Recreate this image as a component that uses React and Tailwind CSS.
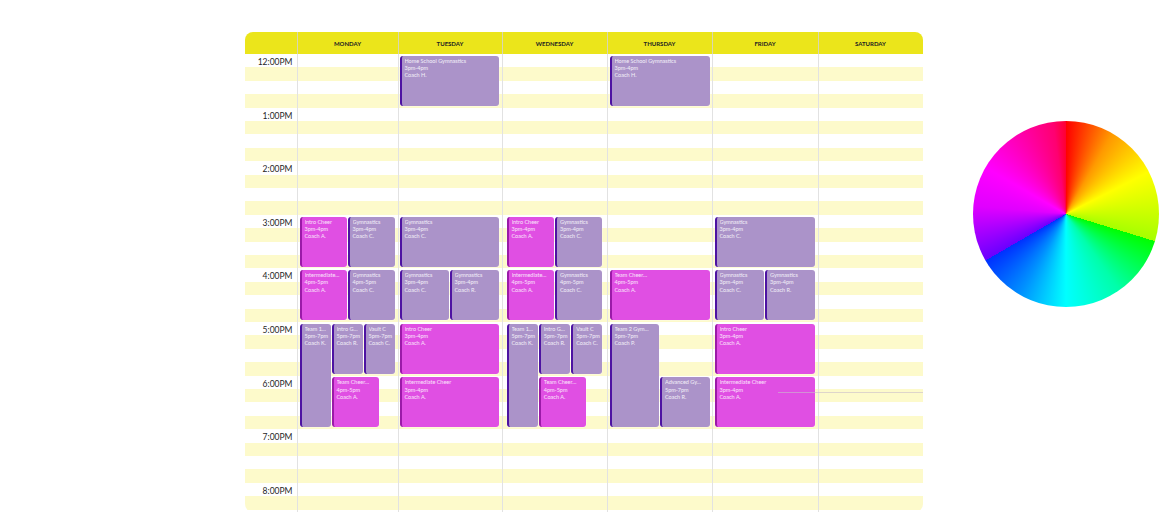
import React from "react";

const HOURS = ["12:00PM", "1:00PM", "2:00PM", "3:00PM", "4:00PM", "5:00PM", "6:00PM", "7:00PM", "8:00PM"];

const KIND = {
  gym: "bg-[#ab93c9] border-[#4d13a2]",
  cheer: "bg-[#e04fe3] border-[#9b1aa8]",
};

// row = quarter-hour slot from 12:00PM, col = sixths of the day column
const DAYS = [
  {
    name: "MONDAY",
    width: "w-[101px]",
    pad: "pl-[2px] pr-[2px]",
    events: [
      { title: "Intro Cheer", time: "3pm-4pm", coach: "Coach A.", kind: "cheer", pos: "row-[13/span_4] col-[1/span_3]" },
      { title: "Gymnastics", time: "3pm-4pm", coach: "Coach C.", kind: "gym", pos: "row-[13/span_4] col-[4/span_3]" },
      { title: "Intermediate…", time: "4pm-5pm", coach: "Coach A.", kind: "cheer", pos: "row-[17/span_4] col-[1/span_3]" },
      { title: "Gymnastics", time: "4pm-5pm", coach: "Coach C.", kind: "gym", pos: "row-[17/span_4] col-[4/span_3]" },
      { title: "Team 1…", time: "5pm-7pm", coach: "Coach K.", kind: "gym", pos: "row-[21/span_8] col-[1/span_2]" },
      { title: "Intro G…", time: "5pm-7pm", coach: "Coach R.", kind: "gym", pos: "row-[21/span_4] col-[3/span_2]" },
      { title: "Vault C", time: "5pm-7pm", coach: "Coach C.", kind: "gym", pos: "row-[21/span_4] col-[5/span_2]" },
      { title: "Team Cheer…", time: "4pm-5pm", coach: "Coach A.", kind: "cheer", pos: "row-[25/span_4] col-[3/span_3]" },
    ],
  },
  {
    name: "TUESDAY",
    width: "w-[104px]",
    pad: "pl-[1px] pr-[2px]",
    events: [
      { title: "Home School Gymnastics", time: "3pm-4pm", coach: "Coach H.", kind: "gym", pos: "row-[1/span_4] col-[1/span_6]" },
      { title: "Gymnastics", time: "3pm-4pm", coach: "Coach C.", kind: "gym", pos: "row-[13/span_4] col-[1/span_6]" },
      { title: "Gymnastics", time: "3pm-4pm", coach: "Coach C.", kind: "gym", pos: "row-[17/span_4] col-[1/span_3]" },
      { title: "Gymnastics", time: "3pm-4pm", coach: "Coach R.", kind: "gym", pos: "row-[17/span_4] col-[4/span_3]" },
      { title: "Intro Cheer", time: "3pm-4pm", coach: "Coach A.", kind: "cheer", pos: "row-[21/span_4] col-[1/span_6]" },
      { title: "Intermediate Cheer", time: "3pm-4pm", coach: "Coach A.", kind: "cheer", pos: "row-[25/span_4] col-[1/span_6]" },
    ],
  },
  {
    name: "WEDNESDAY",
    width: "w-[105px]",
    pad: "pl-[4px] pr-[3px]",
    events: [
      { title: "Intro Cheer", time: "3pm-4pm", coach: "Coach A.", kind: "cheer", pos: "row-[13/span_4] col-[1/span_3]" },
      { title: "Gymnastics", time: "3pm-4pm", coach: "Coach C.", kind: "gym", pos: "row-[13/span_4] col-[4/span_3]" },
      { title: "Intermediate…", time: "4pm-5pm", coach: "Coach A.", kind: "cheer", pos: "row-[17/span_4] col-[1/span_3]" },
      { title: "Gymnastics", time: "4pm-5pm", coach: "Coach C.", kind: "gym", pos: "row-[17/span_4] col-[4/span_3]" },
      { title: "Team 1…", time: "5pm-7pm", coach: "Coach K.", kind: "gym", pos: "row-[21/span_8] col-[1/span_2]" },
      { title: "Intro G…", time: "5pm-7pm", coach: "Coach R.", kind: "gym", pos: "row-[21/span_4] col-[3/span_2]" },
      { title: "Vault C", time: "5pm-7pm", coach: "Coach C.", kind: "gym", pos: "row-[21/span_4] col-[5/span_2]" },
      { title: "Team Cheer…", time: "4pm-5pm", coach: "Coach A.", kind: "cheer", pos: "row-[25/span_4] col-[3/span_3]" },
    ],
  },
  {
    name: "THURSDAY",
    width: "w-[105px]",
    pad: "pl-[2px] pr-[1px]",
    events: [
      { title: "Home School Gymnastics", time: "3pm-4pm", coach: "Coach H.", kind: "gym", pos: "row-[1/span_4] col-[1/span_6]" },
      { title: "Team Cheer…", time: "4pm-5pm", coach: "Coach A.", kind: "cheer", pos: "row-[17/span_4] col-[1/span_6]" },
      { title: "Team 2 Gym…", time: "5pm-7pm", coach: "Coach P.", kind: "gym", pos: "row-[21/span_8] col-[1/span_3]" },
      { title: "Advanced Gy…", time: "5pm-7pm", coach: "Coach R.", kind: "gym", pos: "row-[25/span_4] col-[4/span_3]" },
    ],
  },
  {
    name: "FRIDAY",
    width: "w-[106px]",
    pad: "pl-[2px] pr-[2px]",
    events: [
      { title: "Gymnastics", time: "3pm-4pm", coach: "Coach C.", kind: "gym", pos: "row-[13/span_4] col-[1/span_6]" },
      { title: "Gymnastics", time: "3pm-4pm", coach: "Coach C.", kind: "gym", pos: "row-[17/span_4] col-[1/span_3]" },
      { title: "Gymnastics", time: "3pm-4pm", coach: "Coach R.", kind: "gym", pos: "row-[17/span_4] col-[4/span_3]" },
      { title: "Intro Cheer", time: "3pm-4pm", coach: "Coach A.", kind: "cheer", pos: "row-[21/span_4] col-[1/span_6]" },
      { title: "Intermediate Cheer", time: "3pm-4pm", coach: "Coach A.", kind: "cheer", pos: "row-[25/span_4] col-[1/span_6]" },
    ],
  },
  { name: "SATURDAY", width: "w-[105px]", pad: "pl-[2px] pr-[2px]", events: [] },
];

function EventBlock({ ev }) {
  return (
    <div className={`${ev.pos} pt-[2px] pb-[1.5px] pr-[1px] min-w-0`}>
      <div
        className={`h-full rounded-[3px] border-l-2 ${KIND[ev.kind]} pl-[3px] pr-[2px] pt-[2px] overflow-hidden text-[5.5px] leading-[7.2px] text-white/85 whitespace-nowrap shadow-[0_0_0_0.5px_rgba(255,255,255,0.5)]`}
      >
        <div className="overflow-hidden">{ev.title}</div>
        <div>{ev.time}</div>
        <div>{ev.coach}</div>
      </div>
    </div>
  );
}

function ColorWheel() {
  return (
    <div className="absolute left-[973px] top-[121px] w-[186px] h-[186px] rounded-full bg-[conic-gradient(#ff0000_0deg,#ff9900_30deg,#ffff00_63deg,#a6ff00_107deg,#00ff00_107deg,#00ffaa_145deg,#00ffff_180deg,#0090ff_210deg,#0030ff_240deg,#6a00ff_240deg,#e000ff_275deg,#ff00ff_300deg,#ff0070_352deg,#ff0030_360deg)]" />
  );
}

export default function App() {
  return (
    <div className="relative w-full h-[529px] bg-white flex justify-center pt-[32px] font-['Lato',sans-serif]">
      <div className="w-[678px] h-[480px] rounded-[8px] overflow-hidden flex flex-col">
        {/* day headers */}
        <div className="h-[22px] shrink-0 flex bg-[#ebe51b]">
          <div className="w-[52px] shrink-0" />
          {DAYS.map((d) => (
            <div
              key={d.name}
              className={`${d.width} shrink-0 border-l border-[#d8d6b4] flex items-center justify-center text-[6px] font-bold text-[#222222]`}
            >
              {d.name}
            </div>
          ))}
        </div>

        {/* time grid */}
        <div className="relative flex-1 flex bg-[repeating-linear-gradient(to_bottom,#ffffff_0px,#ffffff_13.4px,#fdfacb_13.4px,#fdfacb_26.8px)]">
          <div className="w-[52px] shrink-0 flex flex-col">
            {HOURS.map((h) => (
              <div key={h} className="h-[53.6px] shrink-0">
                <div className="pt-[3px] pr-[4px] text-right text-[8.5px] leading-[11px] text-[#1f1f1f]">{h}</div>
              </div>
            ))}
          </div>
          {DAYS.map((d) => (
            <div
              key={d.name}
              className={`${d.width} ${d.pad} shrink-0 border-l border-[#e2e2e2] grid grid-cols-6 grid-rows-[repeat(34,13.4px)]`}
            >
              {d.events.map((ev, i) => (
                <EventBlock key={i} ev={ev} />
              ))}
            </div>
          ))}
          <div className="absolute left-[533px] top-[338px] w-[145px] h-px bg-[#c9bccb]/60" />
        </div>
      </div>
      <ColorWheel />
    </div>
  );
}
